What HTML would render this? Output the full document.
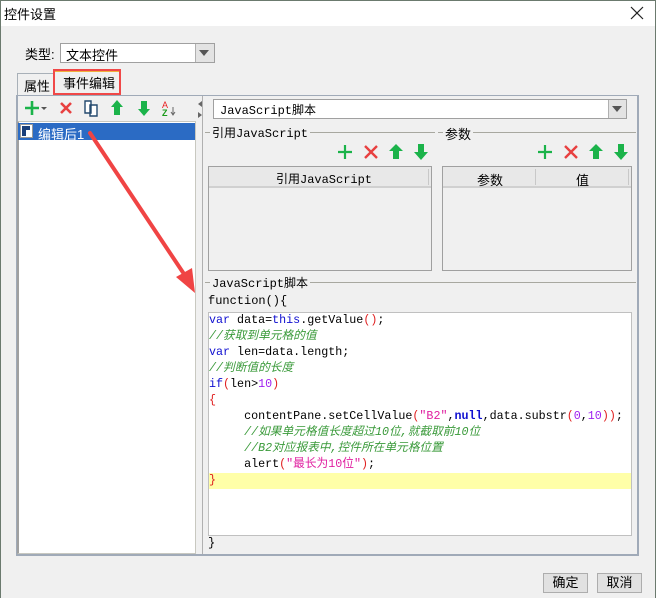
<!DOCTYPE html>
<html><head><meta charset="utf-8"><style>
*{box-sizing:border-box;margin:0;padding:0}
body{width:656px;height:598px;overflow:hidden;background:#f0f0f0;font-family:"Liberation Sans","Noto Sans CJK SC",sans-serif;font-size:13px;color:#000;position:relative}
.a{position:absolute}
.win{left:0;top:0;width:656px;height:598px;border:1px solid #6b7a6e;border-bottom:none}
.title{left:1px;top:1px;width:654px;height:25px;background:#fff}
.mono{font-family:"Liberation Mono","Noto Sans CJK SC",monospace}
.code div{height:16px;line-height:16px;white-space:pre;font-size:11.7px}
.kw{color:#1010d0}.cm{color:#3a9a3a;font-style:italic}.rd{color:#e02020}.pu{color:#a020f0}.st{color:#e020a0}
.grp{height:1px;background:#a8a8a0}
.btn{border:1px solid #adadad;background:#e1e1e1;text-align:center;line-height:18px;height:20px;width:45px}
</style></head><body>
<div class="a win"></div>
<div class="a title"></div>
<div class="a" style="left:4px;top:4px">控件设置</div>
<svg class="a" style="left:630px;top:6px" width="14" height="14"><path d="M1 1L13 13M13 1L1 13" stroke="#222" stroke-width="1.2"/></svg>

<div class="a" style="left:25px;top:44px">类型:</div>
<div class="a" style="left:60px;top:43px;width:155px;height:20px;background:#fff;border:1px solid #a0a0a0"></div>
<div class="a" style="left:66px;top:45px">文本控件</div>
<div class="a" style="left:195px;top:44px;width:19px;height:18px;background:#e3e3e3;border-left:1px solid #b0b0b0"></div>
<svg class="a" style="left:199px;top:50px" width="10" height="6"><path d="M0 0H10L5 6Z" fill="#555"/></svg>

<!-- tabs -->
<div class="a" style="left:17px;top:73px;width:37px;height:23px;border:1px solid #a8b0b8;border-bottom:none;background:#f0f0f0"></div>
<div class="a" style="left:24px;top:76px">属性</div>
<div class="a" style="left:54px;top:70px;width:66px;height:26px;background:#f0f0f0;border-top:2px solid #f0b040"></div>
<div class="a" style="left:63px;top:73px">事件编辑</div>
<div class="a" style="left:53px;top:69px;width:68px;height:26px;border:2px solid #f04848"></div>

<!-- panel frame -->
<div class="a" style="left:16px;top:95px;width:623px;height:461px;border:2px solid #a0aab8;border-top-width:1px"></div>
<!-- left list -->
<div class="a" style="left:17px;top:121px;width:179px;height:433px;background:#fff;border:1px solid #c8c8c0;border-left:2px solid #a0a0a0"></div>
<div class="a" style="left:18px;top:123px;width:177px;height:17px;background:#2b6bc4"></div>
<svg class="a" style="left:20px;top:124px" width="14" height="15"><rect x="0.5" y="0.5" width="12" height="13" fill="#fff" stroke="#999"/><rect x="2" y="2" width="8" height="10" fill="#1a3f7a"/><rect x="6" y="6" width="4" height="6" fill="#fff"/></svg>
<div class="a" style="left:38px;top:124px;color:#fff">编辑后1</div>
<!-- left toolbar -->
<svg class="a" style="left:24px;top:99px" width="170" height="18">
<path d="M8 2V16M1 9H15" stroke="#1bb34a" stroke-width="2.6"/><path d="M17 8H23L20 11Z" fill="#555"/>
<path d="M37 4L47 14M47 4L37 14" stroke="#e84040" stroke-width="2.6"/>
<path d="M61 2H67V14H61Z M66 6H73V17H66Z" fill="#fff" stroke="#23496e" stroke-width="1.4"/>
<path d="M93 1L99 8H96V16H90V8H87Z" fill="#1bb34a"/>
<path d="M117 1V9H114L120 16L126 9H123V1Z" transform="translate(0,1)" fill="#1bb34a"/>
<text x="138" y="9" font-size="9" fill="#e82020" font-family="Liberation Sans">A</text><text x="138" y="17" font-size="9" fill="#1a9a1a" font-weight="bold" font-family="Liberation Sans">Z</text><path d="M149 8V15M147 13L149 16L151 13" stroke="#666" fill="none"/>
</svg>
<!-- splitter -->
<div class="a" style="left:197px;top:96px;width:6px;height:458px;background:#f0f0f0;border-right:1px solid #b0b0b0"></div>
<svg class="a" style="left:197px;top:100px" width="6" height="20"><path d="M5 1L1 4L5 7Z M1 12L5 15L1 18Z" fill="#666"/></svg>

<!-- right panel -->
<div class="a" style="left:213px;top:99px;width:414px;height:20px;background:#fff;border:1px solid #a0a0a0"></div>
<div class="a mono" style="left:220px;top:101px;font-size:12px">JavaScript脚本</div>
<div class="a" style="left:608px;top:100px;width:18px;height:18px;background:#e3e3e3;border-left:1px solid #b0b0b0"></div>
<svg class="a" style="left:612px;top:106px" width="10" height="6"><path d="M0 0H10L5 6Z" fill="#555"/></svg>

<div class="a grp" style="left:205px;top:132px;width:230px"></div>
<div class="a mono" style="left:210px;top:124px;background:#f0f0f0;padding:0 2px;font-size:12px">引用JavaScript</div>
<div class="a grp" style="left:438px;top:132px;width:198px"></div>
<div class="a" style="left:443px;top:124px;background:#f0f0f0;padding:0 2px">参数</div>

<svg class="a" style="left:337px;top:143px" width="95" height="18">
<path d="M8 2V16M1 9H15" stroke="#1bb34a" stroke-width="2.2"/>
<path d="M28 3L40 15M40 3L28 15" stroke="#e84040" stroke-width="2.4"/>
<path d="M59 1L66 8H62V16H56V8H52Z" fill="#1bb34a"/>
<path d="M81 1V9H77L84 17L91 9H87V1Z" fill="#1bb34a"/>
</svg>
<svg class="a" style="left:537px;top:143px" width="95" height="18">
<path d="M8 2V16M1 9H15" stroke="#1bb34a" stroke-width="2.2"/>
<path d="M28 3L40 15M40 3L28 15" stroke="#e84040" stroke-width="2.4"/>
<path d="M59 1L66 8H62V16H56V8H52Z" fill="#1bb34a"/>
<path d="M81 1V9H77L84 17L91 9H87V1Z" fill="#1bb34a"/>
</svg>

<div class="a" style="left:208px;top:166px;width:224px;height:105px;border:1px solid #a0a0a0;background:#f0f0f0"></div>
<div class="a" style="left:209px;top:167px;width:222px;height:21px;background:#e8e8e8;border-bottom:2px solid #d0d0d0"></div>
<div class="a" style="left:428px;top:169px;width:1px;height:16px;background:#c8c8c8"></div>
<div class="a mono" style="left:276px;top:170px;font-size:12px">引用JavaScript</div>
<div class="a" style="left:442px;top:166px;width:190px;height:105px;border:1px solid #a0a0a0;background:#f0f0f0"></div>
<div class="a" style="left:443px;top:167px;width:188px;height:21px;background:#e8e8e8;border-bottom:2px solid #d0d0d0"></div>
<div class="a" style="left:535px;top:169px;width:1px;height:16px;background:#c8c8c8"></div>
<div class="a" style="left:628px;top:169px;width:1px;height:16px;background:#c8c8c8"></div>
<div class="a" style="left:477px;top:170px">参数</div>
<div class="a" style="left:576px;top:170px">值</div>

<div class="a grp" style="left:205px;top:282px;width:431px"></div>
<div class="a mono" style="left:210px;top:274px;background:#f0f0f0;padding:0 2px;font-size:12px">JavaScript脚本</div>
<div class="a mono" style="left:208px;top:294px;font-size:12px">function(){</div>
<div class="a" style="left:208px;top:312px;width:424px;height:224px;background:#fff;border:1px solid #c0c0c0"></div>
<div class="a" style="left:209px;top:473px;width:422px;height:16px;background:#ffffa8"></div>
<div class="a mono code" style="left:209px;top:312px">
<div><span class="kw">var</span> data=<span class="kw">this</span>.getValue<span class="rd">()</span>;</div>
<div class="cm">//获取到单元格的值</div>
<div><span class="kw">var</span> len=data.length;</div>
<div class="cm">//判断值的长度</div>
<div><span class="kw">if</span><span class="rd">(</span>len&gt;<span class="pu">10</span><span class="rd">)</span></div>
<div class="rd">{</div>
<div>     contentPane.setCellValue<span class="rd">(</span><span class="st">"B2"</span>,<b class="kw">null</b>,data.substr<span class="rd">(</span><span class="pu">0</span>,<span class="pu">10</span><span class="rd">))</span>;</div>
<div class="cm">     //如果单元格值长度超过10位,就截取前10位</div>
<div class="cm">     //B2对应报表中,控件所在单元格位置</div>
<div>     alert<span class="rd">(</span><span class="st">"最长为10位"</span><span class="rd">)</span>;</div>
<div class="rd">}</div>
</div>
<div class="a mono" style="left:208px;top:536px;font-size:12px">}</div>

<!-- arrow -->
<svg class="a" style="left:80px;top:125px" width="130" height="180"><path d="M10 8L108 155" stroke="#f04444" stroke-width="4" stroke-linecap="round"/><path d="M115 168L96 152L112 143Z" fill="#f04444"/></svg>

<div class="a btn" style="left:543px;top:573px">确定</div>
<div class="a btn" style="left:597px;top:573px">取消</div>
</body></html>
